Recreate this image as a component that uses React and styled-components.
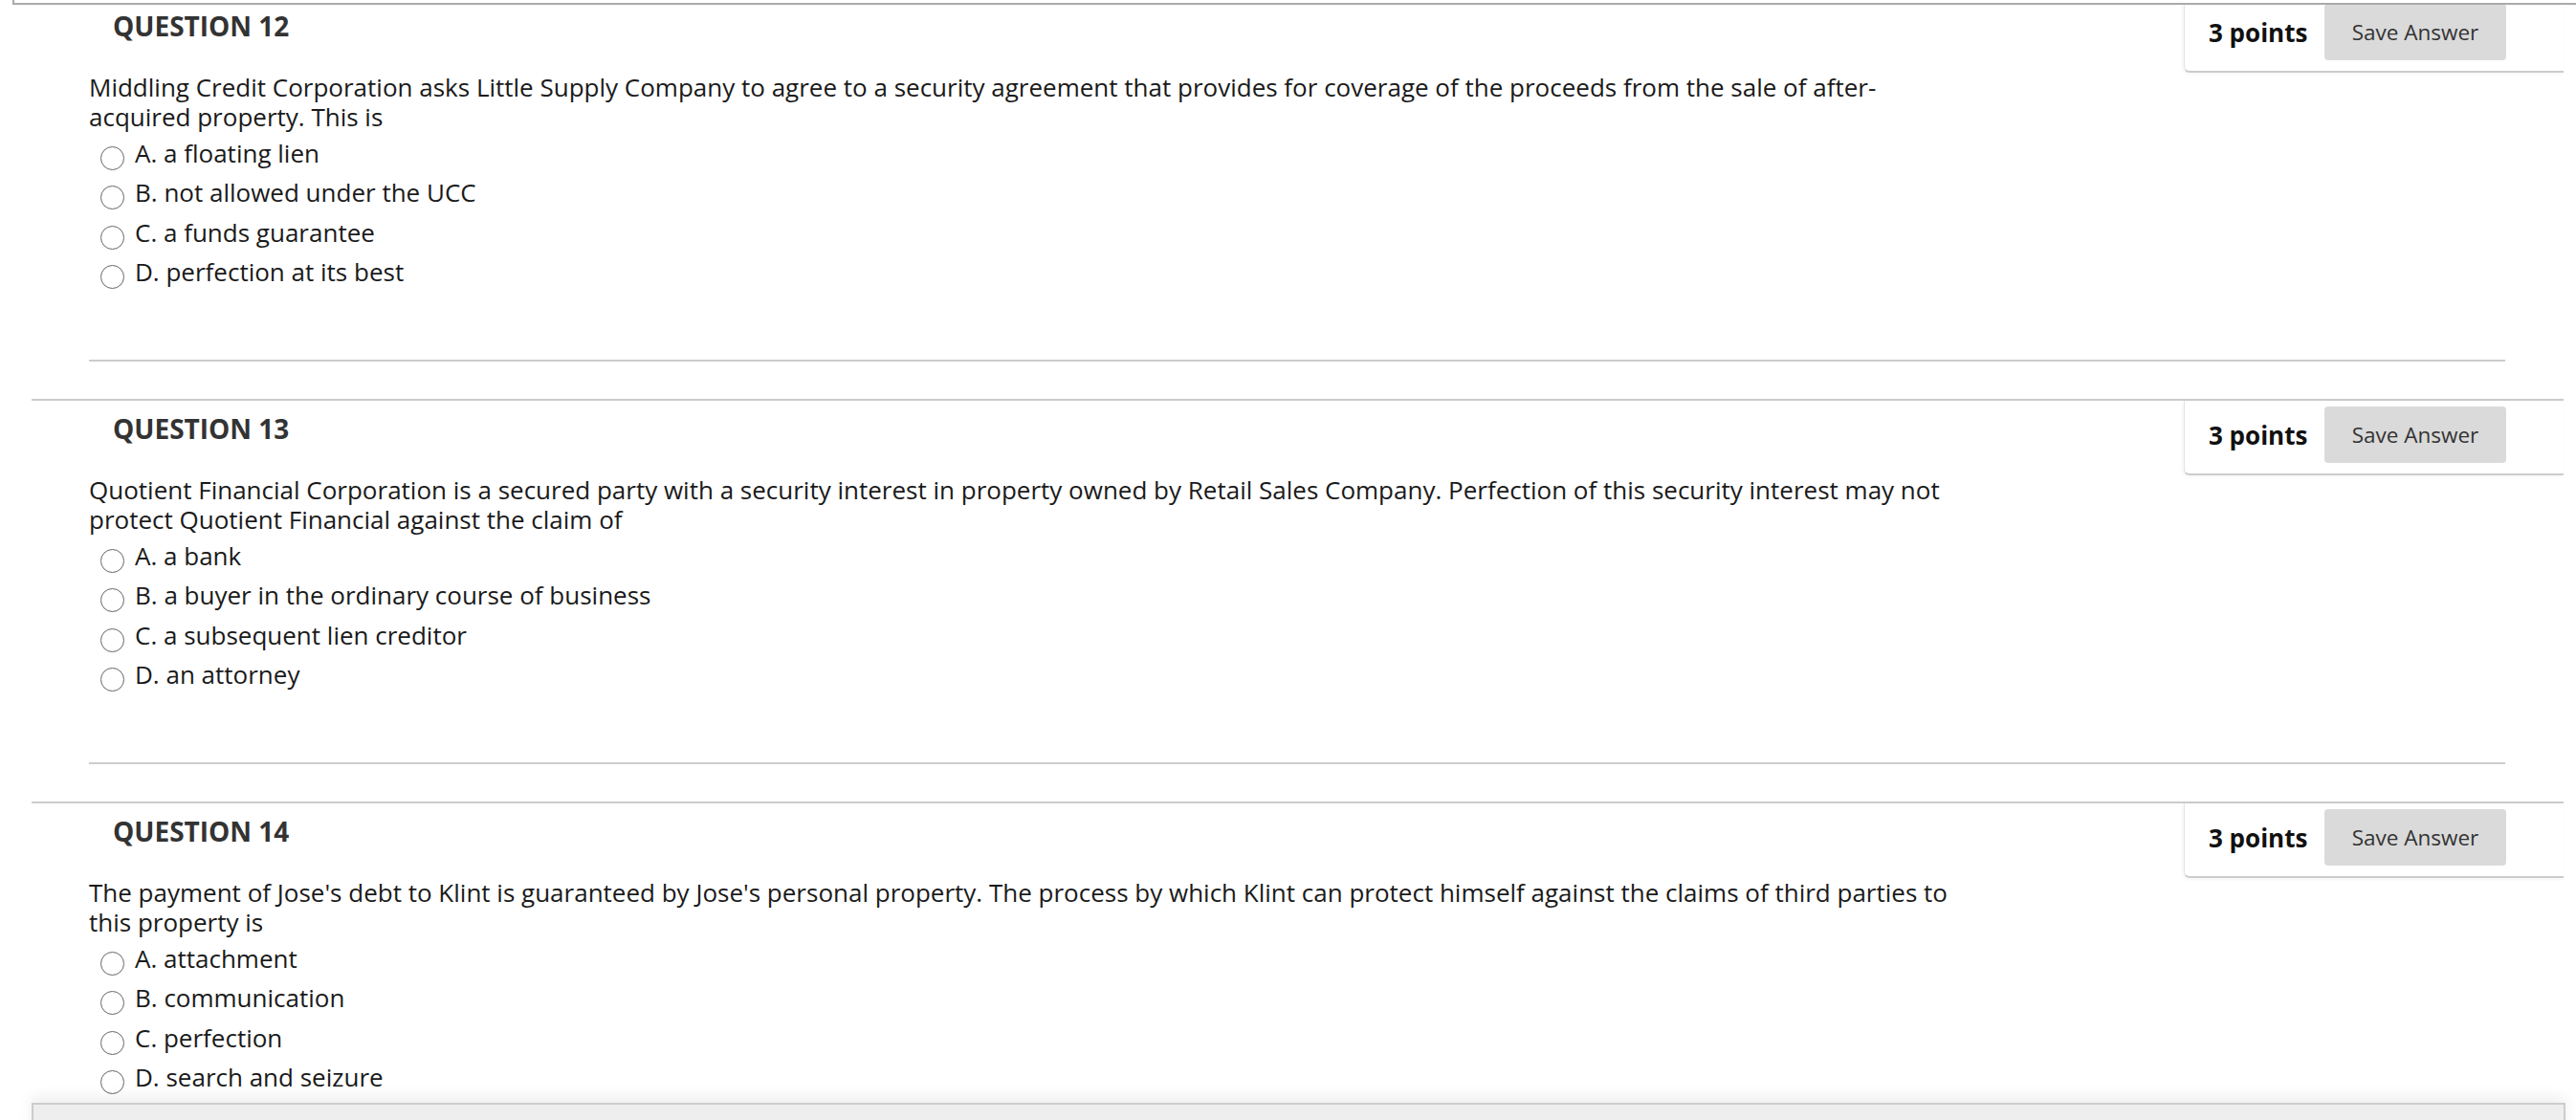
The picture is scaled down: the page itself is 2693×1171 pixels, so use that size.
import styled, { createGlobalStyle } from "styled-components";

const GlobalStyle = createGlobalStyle`
  html, body {
    margin: 0;
    padding: 0;
    background: #fff;
    overflow: hidden;
  }
  body {
    font-family: "Open Sans", "Liberation Sans", sans-serif;
    color: #1a1a1a;
  }
`;

const TopEdge = styled.div`
  position: fixed;
  top: -30px;
  left: 13px;
  right: 0;
  height: 33px;
  background: #fff;
  border-left: 2px solid #aaa;
  border-bottom: 2px solid #aaa;
  z-index: 5;
`;

const FooterBar = styled.div`
  position: fixed;
  top: 1153px;
  left: 33px;
  width: 2645px;
  height: 60px;
  background: #eee;
  border: 2px solid #ccc;
  box-shadow: 0 -6px 14px rgba(0, 0, 0, 0.07);
  z-index: 5;
`;

const Page = styled.div`
  margin-top: -4px;
`;

const Section = styled.section`
  margin-left: 33px;
  width: 2647px;
  border-top: 2px solid #ccc;
  padding-bottom: 39.5px;
`;

const HeaderRow = styled.div`
  display: flex;
  align-items: flex-start;
  justify-content: space-between;
  height: 78px;
`;

const Heading = styled.h3`
  margin: 0;
  padding: 10px 0 0 85px;
  font-size: 28px;
  line-height: 38px;
  font-weight: 700;
  color: #333;
`;

const PointsBox = styled.div`
  box-sizing: border-box;
  width: 397px;
  height: 78px;
  display: flex;
  align-items: center;
  justify-content: space-between;
  padding: 6px 60px 11px 25px;
  border-left: 1px solid #e4e4e4;
  border-bottom: 2px solid #ccc;
  border-bottom-left-radius: 6px;
  box-shadow: -1px 1px 4px rgba(0, 0, 0, 0.05);
  background: #fff;
`;

const Points = styled.span`
  font-size: 26px;
  font-weight: 700;
  color: #111;
  white-space: nowrap;
`;

const SaveButton = styled.button`
  box-sizing: border-box;
  width: 190px;
  height: 59px;
  padding: 0;
  border: none;
  border-radius: 4px;
  background: #dadada;
  color: #333;
  font-family: "Open Sans", "Liberation Sans", sans-serif;
  font-size: 22.5px;
  cursor: pointer;
`;

const Body = styled.div`
  padding-left: 60px;
`;

const Prompt = styled.p`
  margin: 0;
  width: 1955px;
  font-size: 26px;
  line-height: 31px;
`;

const Options = styled.ul`
  list-style: none;
  margin: 6.5px 0 0;
  padding: 0 0 0 12px;
  display: flex;
  flex-direction: column;
  gap: 11.5px;
`;

const Option = styled.li`
  display: flex;
  align-items: flex-start;
  height: 30px;
  font-size: 26px;
  line-height: 30px;
`;

const Radio = styled.span`
  box-sizing: border-box;
  flex: none;
  width: 25px;
  height: 25px;
  margin: 8px 11px 0 0;
  border: 1.5px solid #666;
  border-radius: 50%;
  background: #fff;
`;

const Separator = styled.hr`
  margin: 76.5px 0 0;
  width: 2526px;
  border: none;
  border-top: 2px solid #ccc;
`;

const questions = [
  {
    n: 12,
    text: "Middling Credit Corporation asks Little Supply Company to agree to a security agreement that provides for coverage of the proceeds from the sale of after-acquired property. This is",
    options: ["A. a floating lien", "B. not allowed under the UCC", "C. a funds guarantee", "D. perfection at its best"],
  },
  {
    n: 13,
    text: "Quotient Financial Corporation is a secured party with a security interest in property owned by Retail Sales Company. Perfection of this security interest may not protect Quotient Financial against the claim of",
    options: ["A. a bank", "B. a buyer in the ordinary course of business", "C. a subsequent lien creditor", "D. an attorney"],
  },
  {
    n: 14,
    text: "The payment of Jose's debt to Klint is guaranteed by Jose's personal property. The process by which Klint can protect himself against the claims of third parties to this property is",
    options: ["A. attachment", "B. communication", "C. perfection", "D. search and seizure"],
  },
];

function Question({ n, text, options }) {
  return (
    <Section>
      <HeaderRow>
        <Heading>QUESTION {n}</Heading>
        <PointsBox>
          <Points>3 points</Points>
          <SaveButton>Save Answer</SaveButton>
        </PointsBox>
      </HeaderRow>
      <Body>
        <Prompt>{text}</Prompt>
        <Options>
          {options.map((o) => (
            <Option key={o}>
              <Radio />
              {o}
            </Option>
          ))}
        </Options>
        <Separator />
      </Body>
    </Section>
  );
}

export default function App() {
  return (
    <>
      <GlobalStyle />
      <TopEdge />
      <Page>
        {questions.map((q) => (
          <Question key={q.n} {...q} />
        ))}
      </Page>
      <FooterBar />
    </>
  );
}
